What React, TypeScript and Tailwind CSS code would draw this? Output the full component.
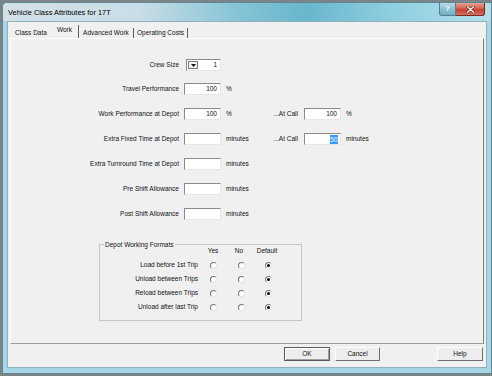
import React from "react";

type Call = { value?: string; unit: string; selected?: boolean };
type Row = { label: string; value?: string; unit: string; call?: Call };

const ROWS: Row[] = [
  { label: "Travel Performance", value: "100", unit: "%" },
  { label: "Work Performance at Depot", value: "100", unit: "%", call: { value: "100", unit: "%" } },
  { label: "Extra Fixed Time at Depot", unit: "minutes", call: { value: "50", unit: "minutes", selected: true } },
  { label: "Extra Turnround Time at Depot", unit: "minutes" },
  { label: "Pre Shift Allowance", unit: "minutes" },
  { label: "Post Shift Allowance", unit: "minutes" },
];

const FORMATS = ["Load before 1st Trip", "Unload between Trips", "Reload between Trips", "Unload after last Trip"];

const TABS = [
  { name: "Class Data", w: "w-[40px]", border: false },
  { name: "Work", w: "w-[28px]", border: true, active: true },
  { name: "Advanced Work", w: "w-[55px]", border: true },
  { name: "Operating Costs", w: "w-[54px]", border: true },
];

// classic sunken edit box
function TextBox({ value, selected }: { value?: string; selected?: boolean }) {
  return (
    <div className="h-[12px] w-[37px] shrink-0 bg-white border border-t-[#8a8a8a] border-l-[#8a8a8a] border-r-[#e6e6e6] border-b-[#e6e6e6] flex items-center justify-end pr-[2px]">
      {value &&
        (selected ? (
          <span className="bg-[#3399ff] text-white px-[0.5px] leading-[9px]">{value}</span>
        ) : (
          <span className="pr-[1px]">{value}</span>
        ))}
    </div>
  );
}

function Radio({ checked }: { checked?: boolean }) {
  return (
    <span className="w-[7px] h-[7px] rounded-full bg-white border border-t-[#767676] border-l-[#767676] border-r-[#e4e4e4] border-b-[#e4e4e4] flex items-center justify-center">
      {checked && <span className="w-[3px] h-[3px] rounded-full bg-black" />}
    </span>
  );
}

function Button({ label, isDefault }: { label: string; isDefault?: boolean }) {
  return (
    <div
      className={
        "h-[14px] flex items-center justify-center bg-[#ededed] border " +
        (isDefault
          ? "w-[46px] border-[#5a5a5a] shadow-[inset_1px_1px_0_#fff,inset_-1px_-1px_0_#a0a0a0]"
          : "w-[45px] border-t-white border-l-white border-r-[#6e6e6e] border-b-[#6e6e6e]")
      }
    >
      {label}
    </div>
  );
}

export default function App() {
  return (
    <div className="w-[492px] h-[376px] bg-[#7d8488] pl-[2px] pt-[2px] overflow-hidden font-['Liberation_Sans',Arial,sans-serif] text-[6.5px] leading-none text-[#111]">
      <div className="w-[490px] h-[372px] rounded-tl-[5px] border border-[#5f8794] bg-[#a8d6e4] flex flex-col">
        {/* title bar */}
        <div className="h-[18px] flex items-start rounded-tl-[4px] bg-[linear-gradient(90deg,#d3e1e8_0%,#c8dde6_28%,#86c4d6_48%,#69b6cd_62%,#8fcfe0_80%,#b4dfea_100%)]">
          <div className="self-center pl-[5px] pt-[1px] text-[7.4px] text-black">Vehicle Class Attributes for 17T</div>
          <div className="ml-auto mr-[6px] flex">
            <div className="w-[17px] h-[13px] rounded-bl-[3px] border border-t-0 border-[#4f8094] bg-[linear-gradient(180deg,#b7dbe6_0%,#8cc1d2_50%,#6fafc4_100%)] flex items-center justify-center text-[8px] font-bold text-white">
              ?
            </div>
            <div className="w-[29px] h-[13px] rounded-br-[3px] border border-t-0 border-l-0 border-[#7a2b22] bg-[linear-gradient(180deg,#e8a196_0%,#d4614f_45%,#c4402c_55%,#d27163_100%)] flex items-center justify-center">
              <svg width="9" height="7" viewBox="0 0 9 7">
                <path d="M1.5 0.8 L7.5 6.2 M7.5 0.8 L1.5 6.2" stroke="#5a1c14" strokeWidth="2.6" strokeLinecap="round" />
                <path d="M1.5 0.8 L7.5 6.2 M7.5 0.8 L1.5 6.2" stroke="#ffffff" strokeWidth="1.4" strokeLinecap="round" />
              </svg>
            </div>
          </div>
        </div>

        {/* client area */}
        <div className="mx-[4px] h-[347px] bg-[#f0f0f0] border border-[#8fb1bd] flex flex-col">
          {/* tabs */}
          <div className="h-[16px] pl-[3px] flex items-end">
            {TABS.map((t) => (
              <div
                key={t.name}
                className={
                  t.w +
                  " flex items-center justify-center " +
                  (t.active ? "h-[13px] pb-[2px] " : "h-[10px] ") +
                  (t.border ? "border-r border-r-[#5e5e5e]" : "")
                }
              >
                {t.name}
              </div>
            ))}
          </div>

          {/* tab page */}
          <div className="mx-[2px] h-[306px] border border-t-white border-l-white border-r-[#7a7a7a] border-b-[#9d9d9d] flex flex-col">
            <div className="pt-[20px] flex flex-col gap-[13px]">
              <div className="h-[12px] flex items-center -mb-[1px]">
                <div className="w-[168px] text-right">Crew Size</div>
                <div className="ml-[7px] h-[12px] w-[35px] bg-white border border-t-[#8a8a8a] border-l-[#8a8a8a] border-r-[#e6e6e6] border-b-[#e6e6e6] flex items-center">
                  <div className="ml-[1px] w-[10px] h-[8px] bg-[#f2f2f2] border border-[#7a7a7a] flex items-center justify-center">
                    <svg width="5" height="3" viewBox="0 0 5 3">
                      <path d="M0 0 H5 L2.5 3 Z" fill="#111" />
                    </svg>
                  </div>
                  <span className="ml-auto pr-[3px]">1</span>
                </div>
              </div>

              {ROWS.map((r) => (
                <div key={r.label} className="h-[12px] flex items-center">
                  <div className="w-[168px] text-right">{r.label}</div>
                  <div className="ml-[5px]">
                    <TextBox value={r.value} />
                  </div>
                  <div className="ml-[5px] w-[34px]">{r.unit}</div>
                  {r.call && (
                    <>
                      <div className="w-[38px] text-right">...At Call</div>
                      <div className="ml-[6px]">
                        <TextBox value={r.call.value} selected={r.call.selected} />
                      </div>
                      <div className="ml-[5px]">{r.call.unit}</div>
                    </>
                  )}
                </div>
              ))}
            </div>

            {/* group box */}
            <fieldset className="mt-[21px] ml-[88px] w-[203px] border border-[#c6c6c6] pb-[6px]">
              <legend className="ml-[4px] px-[1px] leading-[7px]">Depot Working Formats</legend>
              <div className="h-[7px] flex items-center">
                <div className="w-[98px]" />
                <div className="w-[30px] text-center">Yes</div>
                <div className="w-[22px] text-center">No</div>
                <div className="w-[34px] text-center">Default</div>
              </div>
              <div className="mt-[3px] flex flex-col">
                {FORMATS.map((f) => (
                  <div key={f} className="h-[14px] flex items-center">
                    <div className="w-[98px] text-right">{f}</div>
                    <div className="w-[30px] flex justify-center">
                      <Radio />
                    </div>
                    <div className="w-[26px] flex justify-center">
                      <Radio />
                    </div>
                    <div className="w-[28px] flex justify-center">
                      <Radio checked />
                    </div>
                  </div>
                ))}
              </div>
            </fieldset>
          </div>

          {/* buttons */}
          <div className="h-[23px] pt-[3px] pl-[276px] pr-[3px] flex items-start">
            <Button label="OK" isDefault />
            <div className="ml-[5px]">
              <Button label="Cancel" />
            </div>
            <div className="ml-auto">
              <div className="w-[46px] h-[14px] flex items-center justify-center bg-[#ededed] border border-t-white border-l-white border-r-[#6e6e6e] border-b-[#6e6e6e]">
                Help
              </div>
            </div>
          </div>
        </div>
      </div>
    </div>
  );
}
